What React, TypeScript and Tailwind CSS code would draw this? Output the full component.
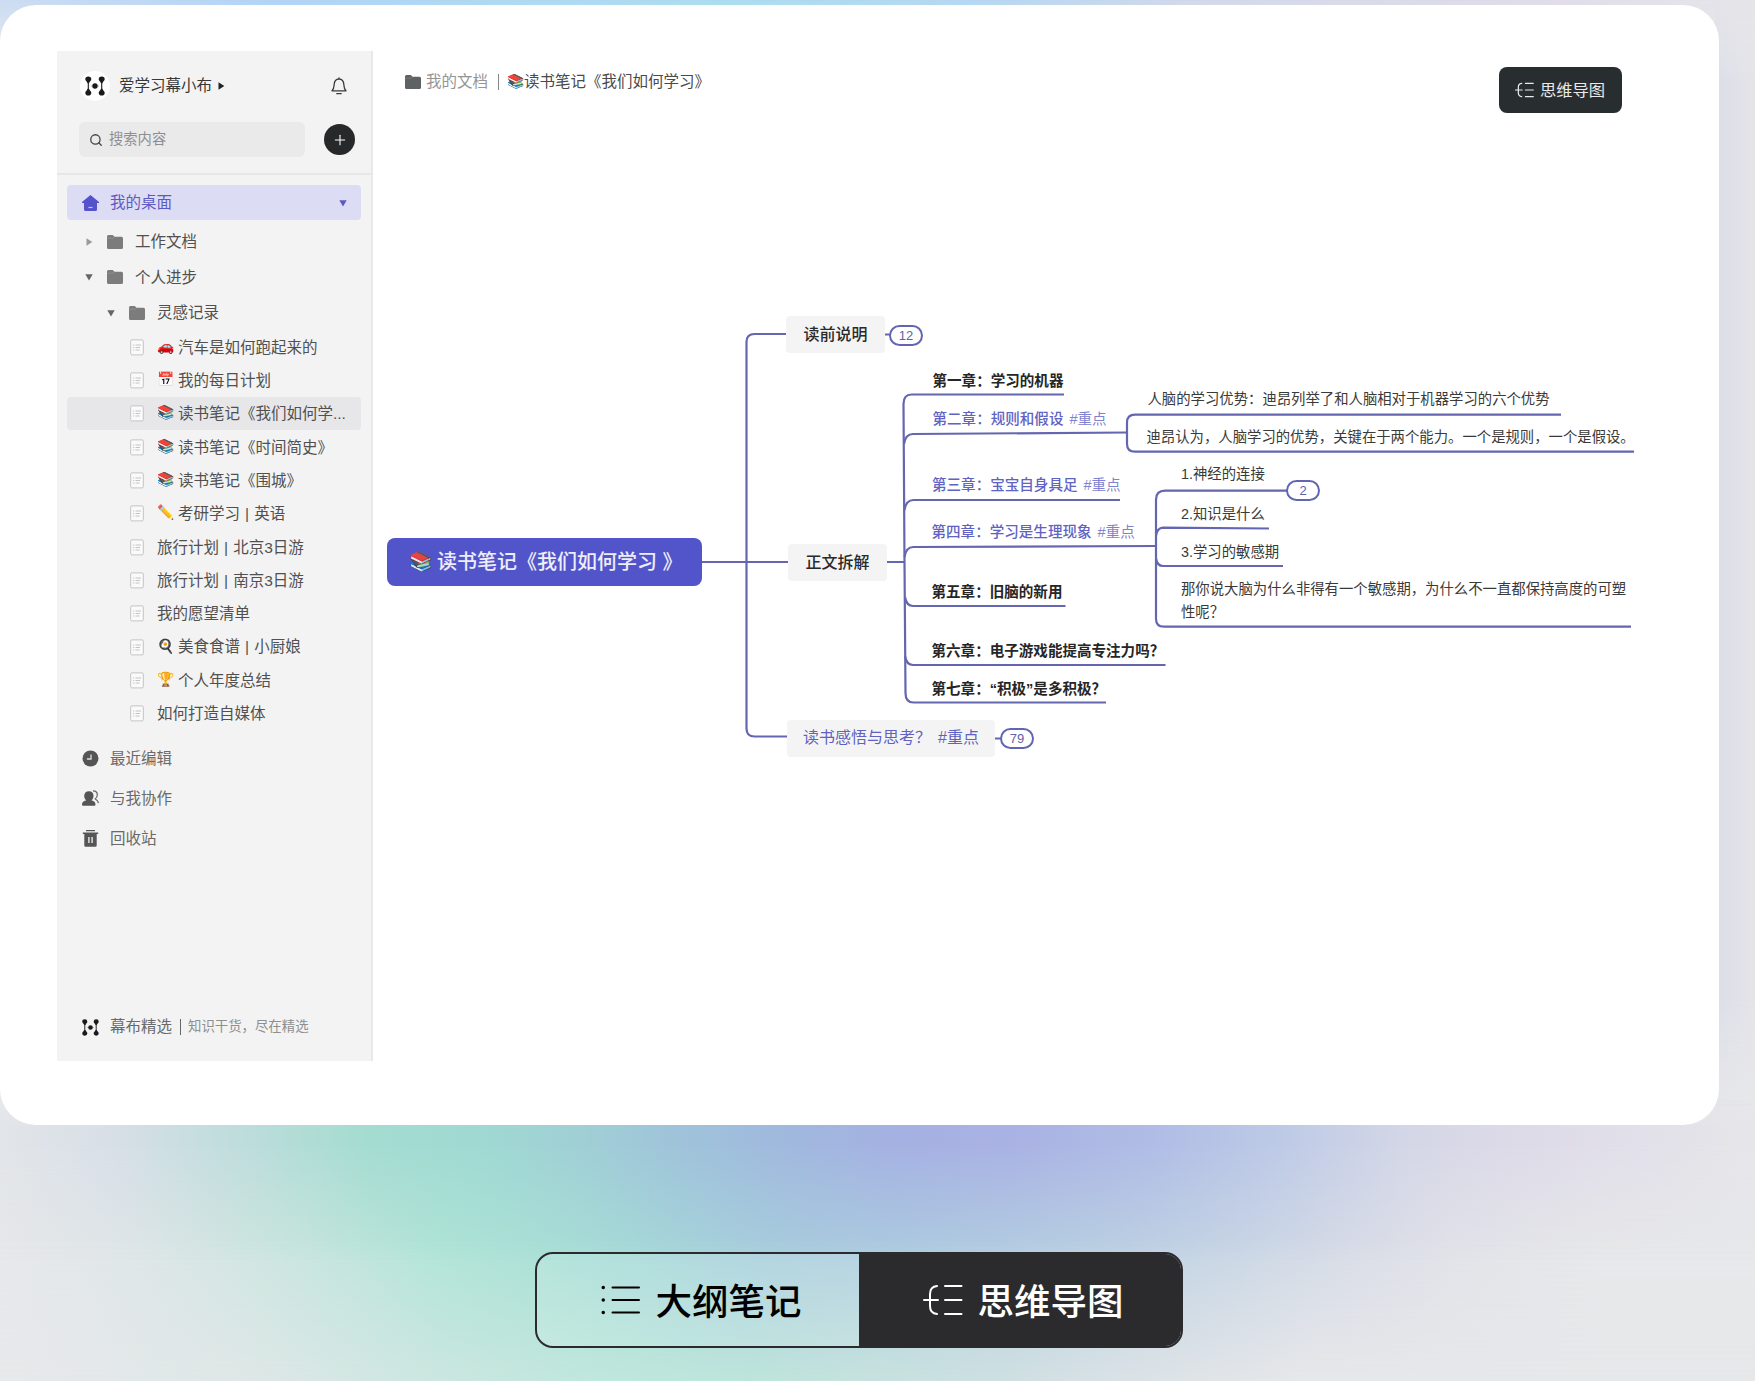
import type { ReactNode } from "react";
import { Plus, Search } from "lucide-react";

interface Doc {
  emoji?: string;
  title: string;
  active?: boolean;
}

interface Topic {
  x: number;
  y: number;
  text: string;
  tag?: string;
  kind: "chapter" | "key" | "note";
}

const docs: Doc[] = [
  { emoji: "🚗", title: "汽车是如何跑起来的" },
  { emoji: "📅", title: "我的每日计划" },
  { emoji: "📚", title: "读书笔记《我们如何学...", active: true },
  { emoji: "📚", title: "读书笔记《时间简史》" },
  { emoji: "📚", title: "读书笔记《围城》" },
  { emoji: "✏️", title: "考研学习 | 英语" },
  { title: "旅行计划 | 北京3日游" },
  { title: "旅行计划 | 南京3日游" },
  { title: "我的愿望清单" },
  { emoji: "🍳", title: "美食食谱 | 小厨娘" },
  { emoji: "🏆", title: "个人年度总结" },
  { title: "如何打造自媒体" },
];

// y is the vertical centre of the first line
const topics: Topic[] = [
  { x: 932.5, y: 382, text: "第一章：学习的机器", kind: "chapter" },
  { x: 932.5, y: 420, text: "第二章：规则和假设", tag: "#重点", kind: "key" },
  { x: 932, y: 486, text: "第三章：宝宝自身具足", tag: "#重点", kind: "key" },
  { x: 931.5, y: 533, text: "第四章：学习是生理现象", tag: "#重点", kind: "key" },
  { x: 931.5, y: 593, text: "第五章：旧脑的新用", kind: "chapter" },
  { x: 931.5, y: 652, text: "第六章：电子游戏能提高专注力吗？", kind: "chapter" },
  { x: 931.5, y: 690, text: "第七章：“积极”是多积极？", kind: "chapter" },
  { x: 1147.5, y: 400, text: "人脑的学习优势：迪昂列举了和人脑相对于机器学习的六个优势", kind: "note" },
  { x: 1146.5, y: 438, text: "迪昂认为，人脑学习的优势，关键在于两个能力。一个是规则，一个是假设。", kind: "note" },
  { x: 1181, y: 475, text: "1.神经的连接", kind: "note" },
  { x: 1181, y: 515, text: "2.知识是什么", kind: "note" },
  { x: 1181, y: 553, text: "3.学习的敏感期", kind: "note" },
  { x: 1181, y: 590, text: "那你说大脑为什么非得有一个敏感期，为什么不一直都保持高度的可塑\n性呢？", kind: "note" },
];

const topicStyles = {
  chapter: "text-[14.55px] font-bold text-[#262626]",
  key: "text-[14.55px] font-medium text-[#6063c2]",
  note: "text-[14.37px] text-[#3a3a3a]",
};

function Logo({ className }: { className: string }) {
  return (
    <svg viewBox="0 0 20 20" className={className} fill="#1b1b1b" stroke="#1b1b1b">
      <path d="M3.300 3v14M16.700 3v14" strokeWidth="1.100" />
      <path
        d="M.3 3.200a3 2.800 0 0 1 6 0c0 1.500-1.600 2-2.300 4H2.600C1.900 5.200.3 4.700.3 3.200zM.3 16.800a3 2.800 0 0 0 6 0c0-1.500-1.600-2-2.300-4H2.600c-.7 2-2.300 2.500-2.300 4zM13.700 3.200a3 2.800 0 0 1 6 0c0 1.500-1.600 2-2.300 4H16c-.7-2-2.300-2.500-2.300-4zM13.700 16.800a3 2.800 0 0 0 6 0c0-1.500-1.600-2-2.300-4H16c-.7 2-2.300 2.500-2.300 4z"
        stroke="none"
      />
      <circle cx="10" cy="10" r="2.700" stroke="none" />
      <path d="M5.800 10h8.400" strokeWidth=".8" strokeDasharray="1 .8" opacity=".5" />
    </svg>
  );
}

function Folder({ color = "#7c7c7c" }: { color?: string }) {
  return (
    <svg viewBox="0 0 16 14" className="h-3.5 w-4 shrink-0" fill={color}>
      <path d="M0 1.500A1.500 1.500 0 0 1 1.500 0h4.200l1.900 1.800h6.900A1.500 1.500 0 0 1 16 3.300v9.200a1.500 1.500 0 0 1-1.500 1.500h-13A1.500 1.500 0 0 1 0 12.500z" />
      <path d="M0 3.200h6.300l1.300-1.400" fill="none" stroke="#fff" strokeOpacity=".25" strokeWidth=".6" />
    </svg>
  );
}

function Caret({ open, className }: { open?: boolean; className: string }) {
  return (
    <svg viewBox="0 0 8 8" className={`size-2 shrink-0 ${className}`} fill="currentColor">
      <path d={open ? "M.3 1.200h7.400L4 7.400z" : "M1.500 .2v7.600L7.300 4z"} />
    </svg>
  );
}

function DocIcon() {
  return (
    <svg viewBox="0 0 14 17" className="h-[17px] w-3.5 shrink-0" fill="none">
      <rect x=".7" y=".9" width="12.600" height="15" rx="1.200" fill="#fafafa" stroke="#c4c4c4" />
      <path d="M3 6h1.200M5.500 6H11M3 8.500h1.200M5.500 8.500H10M3 11h1.200M5.500 11H9.500" stroke="#bdbdbd" strokeWidth=".9" />
    </svg>
  );
}

function BellIcon() {
  return (
    <svg viewBox="0 0 16 18" className="h-[18px] w-4" fill="none" stroke="#3a3a3a" strokeWidth="1.300" strokeLinecap="round" strokeLinejoin="round">
      <path d="M8 .8v1M1 13.800h14c-1.600-1.400-2-3-2.100-5.800C12.700 4.300 10.800 2 8 2S3.300 4.300 3.100 8C3 10.800 2.600 12.400 1 13.800zM5.800 16.700h4.400" />
    </svg>
  );
}

function ListIcon() {
  return (
    <svg viewBox="0 0 39 30" className="h-[30px] w-[39px]" stroke="#000" strokeWidth="2" strokeLinecap="round">
      <path d="M11.500 2.500H38M11.500 15H38M11.500 27.500H38" />
      <path d="M2.200 2.500h.1M2.200 15h.1M2.200 27.500h.1" strokeWidth="3.400" />
    </svg>
  );
}

function MindIcon({ className, strokeWidth = 2 }: { className: string; strokeWidth?: number }) {
  return (
    <svg viewBox="0 0 40 32" className={className} fill="none" stroke="currentColor" strokeWidth={strokeWidth} strokeLinecap="round">
      <path d="M22 2h16.500M22 16h16.500M22 30h16.500M1 16h14M14 2c-5 .5-7 3-7 8v12c0 5 2 7.500 7 8" />
    </svg>
  );
}

function TreeRow({ level, open, label }: { level: 1 | 2; open?: boolean; label: string }) {
  return (
    <div className={`flex h-[35.5px] items-center ${level === 1 ? "pl-[18px]" : "pl-10"}`}>
      <Caret open={open} className={open ? "text-[#666]" : "text-[#999]"} />
      <span className="ml-3.5 mr-3 flex">
        <Folder />
      </span>
      <span>{label}</span>
    </div>
  );
}

function NavRow({ icon, label }: { icon: ReactNode; label: string }) {
  return (
    <div className="flex h-10 items-center gap-[11px] pl-[25px] text-[#6a6a6a]">
      {icon}
      <span>{label}</span>
    </div>
  );
}

function Sidebar() {
  return (
    <aside className="flex w-[316px] shrink-0 flex-col border-r-2 border-[#e9e9e9] bg-[#f3f3f3] text-[15.5px] text-[#505050]">
      <header className="h-[124px] shrink-0 border-b-2 border-[#e7e7e7] pl-[22px] pr-4 pt-5">
        <div className="flex h-[30px] items-center pl-px">
          <span className="flex size-[30px] items-center justify-center rounded-full bg-white">
            <Logo className="size-5" />
          </span>
          <span className="ml-[9px] text-[#383838]">爱学习幕小布</span>
          <Caret className="ml-[5px] text-[#222]" />
          <span className="ml-auto mr-2">
            <BellIcon />
          </span>
        </div>
        <div className="mt-[21px] flex items-center justify-between">
          <div className="flex h-[35px] w-[226px] items-center gap-1.5 rounded-md bg-[#eaeaea] pl-2.5 text-[14.300px] text-[#8f8f8f]">
            <Search size={14} strokeWidth={2.200} className="text-[#444]" />
            <span>搜索内容</span>
          </div>
          <span className="flex size-[31px] items-center justify-center rounded-full bg-[#27282a] text-white">
            <Plus size={16} strokeWidth={1.600} />
          </span>
        </div>
      </header>

      <nav className="px-2.5 pt-2.5">
        <div className="flex h-[35px] items-center rounded bg-[#dddcf5] pl-[15px] pr-3.5 text-[#5c5ac2]">
          <svg viewBox="0 0 17 16" className="h-4 w-[17px]" fill="#5552cc">
            <path d="M8.500 0 17 7v1h-2v6.500A1.500 1.500 0 0 1 13.500 16h-10A1.500 1.500 0 0 1 2 14.500V8H0V7z" />
            <path d="M6.500 12.500h4" stroke="#c9c8f2" strokeWidth="1.200" />
          </svg>
          <span className="ml-[11px]">我的桌面</span>
          <Caret open className="ml-auto" />
        </div>
        <div className="pt-1">
          <TreeRow level={1} label="工作文档" />
          <TreeRow level={1} open label="个人进步" />
          <TreeRow level={2} open label="灵感记录" />
        </div>
        {docs.map((doc, i) => (
          <div
            key={i}
            className={`flex h-[33.33px] items-center whitespace-nowrap rounded pl-[63px] ${doc.active ? "bg-[#e7e7ea]" : ""}`}
          >
            <DocIcon />
            <span className="ml-[13px] flex items-center [word-spacing:0.8px]">
              {doc.emoji && <span className="mb-0.5 mr-[5px] w-4 text-[14px] tracking-[-1px]">{doc.emoji}</span>}
              {doc.title}
            </span>
          </div>
        ))}
      </nav>

      <div className="pt-2">
        <NavRow
          label="最近编辑"
          icon={
            <svg viewBox="0 0 17 17" className="size-[17px]">
              <circle cx="8.500" cy="8.500" r="8" fill="#555" />
              <path d="M9 4.500v4.500H5" fill="none" stroke="#ddd" strokeWidth="1.300" />
            </svg>
          }
        />
        <NavRow
          label="与我协作"
          icon={
            <svg viewBox="0 0 17 17" className="size-[17px]" fill="#555">
              <path d="M7 1.200c3 0 4.500 2 4.500 4.600 0 2-.8 3.500-2 4.500 2.500.7 4 2 4 4.200 0 .8-.5 1.300-1.300 1.300H1.300C.5 15.800 0 15.300 0 14.500c0-2.200 1.500-3.500 4.200-4.200-1.200-1-2-2.500-2-4.500C2.200 3.200 4 1.200 7 1.200z" />
              <path d="M11 .8c3 0 4.500 1.800 4.300 4.200-.1 1.800-.9 3-2 3.900 1.600.9 2.700 2.200 3.200 4.300" fill="none" stroke="#666" strokeWidth="1.200" />
            </svg>
          }
        />
        <NavRow
          label="回收站"
          icon={
            <svg viewBox="0 0 17 17" className="size-[17px]" fill="#555">
              <path d="M4 0h9v1.200H4zM.8 2.500h15.400v1.600H.8zM2.300 4.100h12.400v11.400a1.300 1.300 0 0 1-1.300 1.300H3.600a1.300 1.300 0 0 1-1.300-1.300z" />
              <path d="M6.900 7v6M10.100 7v6" stroke="#e8e8e8" strokeWidth="1.400" />
            </svg>
          }
        />
      </div>

      <footer className="mb-[14px] mt-auto flex h-10 items-center pl-[25px] text-[#6a6a6a]">
        <Logo className="size-[17px]" />
        <span className="ml-[11px]">幕布精选</span>
        <span className="ml-2 h-4 w-px bg-[#666]" />
        <span className="ml-[7px] text-[13.400px] text-[#8f8f8f]">知识干货，尽在精选</span>
      </footer>
    </aside>
  );
}

function Badge({ className, children }: { className: string; children: ReactNode }) {
  return (
    <span
      className={`absolute flex h-[21px] items-center justify-center rounded-full border-2 border-[#6265b3] bg-white text-[13px] text-[#5f62a8] ${className}`}
    >
      {children}
    </span>
  );
}

function MindMap() {
  return (
    <>
      <svg viewBox="0 0 1719 1120" className="absolute left-0 top-0 h-[1120px] w-[1719px]" fill="none" stroke="#6466b0" strokeWidth="2.200">
        <g transform="translate(0 -5)">
          <path d="M702 562h86M786 334h-31.500q-8 0-8 8v386.500q0 8 8 8H787M885 334.500h5M887 562h18M995 738.500h6" />
          <path d="M904.500 562 903.500 404q0-9.500 8-9.500H1064M904.500 562 905.500 693q0 9.500 8 9.500H1106" />
          <path d="M904 444q1.500-10 9-10L1127 432.500M904.500 510q1.500-10 9-10H1120M904.500 557q1.500-10 9-10L1155 546M905 597q1.500 9 8 9H1065.500M905 656q1.500 9 8 9H1165.500" />
          <path d="M1561 414.700H1135q-8 0-8 8V443.700q0 8 8 8H1634" />
          <path d="M1287 490.700H1165q-9 0-9 9V618.700q0 8 8 8H1631M1156 536q1-8 7-8.300L1269 528.500M1156 558q1 8 7 8H1283" />
        </g>
      </svg>

      <div className="absolute left-[387px] top-[533px] flex h-12 w-[315px] items-center rounded-lg bg-[#5254c9] pl-[22px] text-xl font-medium text-white/90">
        <span className="w-7 text-[19px]">📚</span>
        <span className="whitespace-pre pb-px">读书笔记《我们如何学习 》</span>
      </div>
      <div className="absolute left-[786px] top-[311px] flex h-[37px] w-[99px] items-center justify-center rounded bg-[#f4f4f4] font-medium text-[#2a2a2a]">
        读前说明
      </div>
      <div className="absolute left-[788px] top-[539px] flex h-[37px] w-[99px] items-center justify-center rounded bg-[#f4f4f4] font-medium text-[#2a2a2a]">
        正文拆解
      </div>
      <div className="absolute left-[787px] top-[715px] flex h-[37px] w-[208px] items-center rounded bg-[#f4f4f4] pb-0.5 pl-4 text-[#5f62c2]">
        <span className="w-[135px]">读书感悟与思考？</span>
        <span>#重点</span>
      </div>
      <Badge className="left-[889px] top-[320px] w-[34px]">12</Badge>
      <Badge className="left-[1000px] top-[723px] w-[34px]">79</Badge>
      <Badge className="left-[1286px] top-[475px] w-[34px]">2</Badge>

      {topics.map((topic) => (
        <div
          key={topic.text}
          className={`absolute whitespace-pre leading-[23px] ${topicStyles[topic.kind]}`}
          style={{ left: topic.x, top: topic.y - 17 }}
        >
          {topic.text}
          {topic.tag && <span className="ml-1.5 font-normal text-[#7f82cf]">{topic.tag}</span>}
        </div>
      ))}
    </>
  );
}

// Soft colour field behind the card: horizontal gradients that fade into each other downwards
function Backdrop({ children }: { children: ReactNode }) {
  return (
    <div className="relative isolate h-[1381px] w-[1755px] overflow-hidden bg-[#e8e9eb] pt-[5px]">
      <div className="absolute inset-0 -z-10">
        <div className="absolute left-0 top-0 h-16 w-full bg-[linear-gradient(90deg,#ccdcf2_0,#b0d3f6_270px,#a9dcf0_720px,#b4d6f2_980px,#d2d8ea_1200px,#dfdbe8_1520px,#e5e4e9_1740px)] [mask-image:linear-gradient(#000,#0000)]" />
        <div className="absolute bottom-[256px] right-0 top-0 w-10 bg-[linear-gradient(90deg,#dddde9,#e4e4e8)] [mask-image:linear-gradient(#0000,#000_80px,#000_1000px,#0000)]" />
        <div className="absolute bottom-0 left-0 h-[281px] w-full bg-[linear-gradient(90deg,#e8e9eb_0,#dfe8e7_250px,#cbe7e0_450px,#c0e8dc_600px,#bee5dc_750px,#c6e3de_850px,#cfe0e2_1000px,#dde3e7_1150px,#e7e8ea_1300px)] [mask-image:linear-gradient(#0000,#000_60px)]" />
        <div className="absolute bottom-0 left-0 h-[281px] w-full bg-[linear-gradient(90deg,#e6e8ea_0,#dfe6e8_130px,#cbe5df_280px,#b0e4d7_440px,#a8dfd6_560px,#a6d6d9_670px,#a9cddd_780px,#adcce0_900px,#b3cee1_1000px,#bcd1e2_1120px,#c9d6e5_1240px,#d8dce7_1350px,#e2e3e9_1460px,#e7e8ea_1600px)] [mask-image:linear-gradient(#0000,#000_60px,#000_140px,#0000)]" />
        <div className="absolute bottom-[120px] left-0 h-[161px] w-full bg-[linear-gradient(90deg,#e2e5e9_0,#d8dfe7_110px,#c2dddd_220px,#a4dcd1_370px,#9fd9d2_480px,#a0cfd5_580px,#9fc3da_680px,#a0b8de_790px,#a5b1e2_900px,#a9b2e3_1010px,#b0bce5_1150px,#bdcae6_1280px,#d3d6e6_1400px,#dddae8_1510px,#e2e0e9_1650px,#e6e6ea_1755px)] [mask-image:linear-gradient(#0000,#000_25px,#000_45px,#0000)]" />
      </div>
      {children}
    </div>
  );
}

export default function App() {
  return (
    <div className="font-['Liberation_Sans','Noto_Sans_CJK_SC',sans-serif]">
      <Backdrop>
        <main className="relative flex h-[1120px] w-[1719px] rounded-[36px] bg-white py-[46px] pl-[57px]">
          <div className="flex h-[1010px] w-full">
            <Sidebar />
            <section className="flex flex-1 items-start justify-between pl-8 pr-[97.5px] pt-4">
              <div className="flex h-[30px] items-center text-[15.5px]">
                <Folder color="#5f6262" />
                <span className="ml-[5px] text-[#959595]">我的文档</span>
                <span className="ml-2.5 h-4 w-px bg-[#888]" />
                <span className="mb-0.5 ml-2 w-[17px] text-[14px] tracking-[-1px]">📚</span>
                <span className="text-[#4a4a4a]">读书笔记《我们如何学习》</span>
              </div>
              <button className="flex h-[45.5px] w-[123px] items-center justify-center gap-1.5 rounded-lg bg-[#282d30] text-[16.300px] text-white/90">
                <MindIcon className="h-4 w-[19px]" strokeWidth={2.600} />
                思维导图
              </button>
            </section>
          </div>
          <MindMap />
        </main>

        <div className="ml-[535px] mt-[127px] flex h-24 w-[648px] overflow-hidden rounded-[18px] border-2 border-[#2b2b2e] text-[36.500px] font-medium">
          <button className="flex flex-1 items-center justify-center gap-4 bg-white/10 pl-1.5 text-black">
            <ListIcon />
            <span className="pt-1.5">大纲笔记</span>
          </button>
          <button className="flex flex-1 items-center justify-center gap-[15px] bg-[#2b2b2e] pl-1.5 text-white">
            <MindIcon className="h-8 w-10" />
            <span className="pt-1.5">思维导图</span>
          </button>
        </div>
      </Backdrop>
    </div>
  );
}
